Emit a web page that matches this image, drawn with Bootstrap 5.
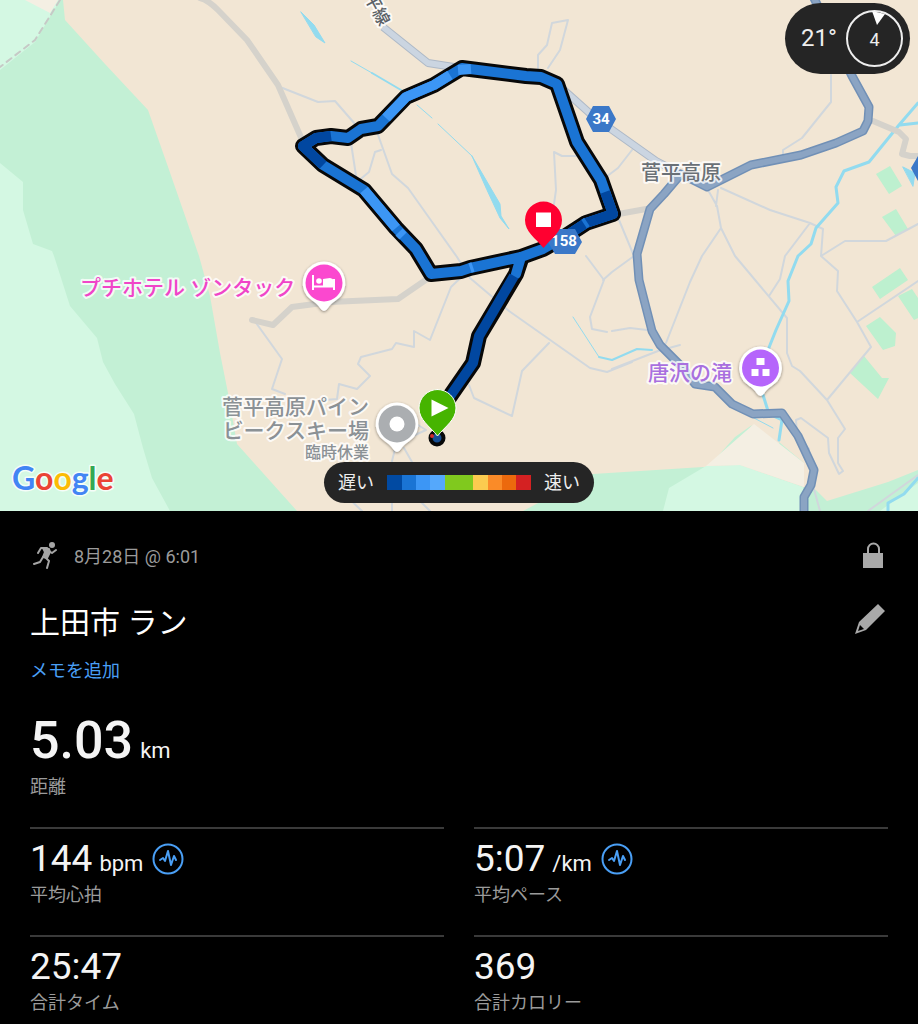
<!DOCTYPE html>
<html lang="ja" data-bs-theme="dark">
<head>
<meta charset="utf-8">
<meta name="viewport" content="width=device-width, initial-scale=1">
<title>上田市 ラン</title>
<link href="https://cdn.jsdelivr.net/npm/bootstrap@5.3.0/dist/css/bootstrap.min.css" rel="stylesheet">
<style>
body{background:#000;color:#f4f4f4;font-family:Roboto,"Noto Sans CJK JP",sans-serif;line-height:1.2}
.map-svg{display:block;width:100%;height:auto}
.map-svg text{font-family:Roboto,"Noto Sans CJK JP",sans-serif;font-weight:500;paint-order:stroke;stroke:#fffc;stroke-width:4px;stroke-linejoin:round}
.map-svg .shield{fill:#fff;stroke:none;font-weight:700;font-size:15px}
.map-svg .brand{font-family:Lato,sans-serif;font-weight:700;font-size:32px;stroke-width:3px}
.map-pill{background:#252525;color:#eee}
.weather{top:3px;right:8px;height:71px;padding:0 7px 0 16px;gap:9px;font-size:24px}
.legend{bottom:8px;left:50%;transform:translateX(-50%);height:41px;padding:0 14px;gap:13px;font-size:18px;white-space:nowrap}
.scale{width:144px;height:15px}
.details{padding:28px 30px 0}
.muted{color:#9b9b9b}
.f18{font-size:18px;line-height:24px}
.date{line-height:28px;padding-top:4px}
.title{font-size:30px;line-height:40px;font-weight:400}
.memo{color:#4a9ff5;text-decoration:none}
.big{font-size:52px;line-height:60px;font-weight:500}
.num{font-size:37px;line-height:44px}
.unit{font-size:22px;line-height:1;margin-left:7px}
.stats{--bs-gutter-x:30px}
.stat{border-top:2px solid #3a3a3a;height:108px;padding-top:8px}
.stat .f18{padding-top:2px}
.icon-btn{background:none;border:0;padding:0;line-height:0;color:#a9a9a9}
.graph-btn{color:#4a9ff5;margin-left:9px}
</style>
</head>
<body>
<section class="position-relative" aria-label="ルートマップ">
<svg class="map-svg" viewBox="0 0 918 511" fill="none" stroke-linejoin="round" stroke-linecap="round">
<defs>
<filter id="sh" x="-30%" y="-30%" width="160%" height="160%"><feDropShadow dx="0" dy="1" stdDeviation="1.5" flood-opacity=".45"/></filter>
<path id="poi" d="M0-21.500A21.500 21.500 0 0 1 17 13C12 18 7 20 4 25Q0 31-4 25C-7 20-12 18-17 13A21.500 21.500 0 0 1 0-21.500Z"/>
<path id="pin" d="M0-18.500A18.500 18.500 0 0 1 18.500 0C18.500 12 8 18 0 28C-8 18-18.500 12-18.500 0A18.500 18.500 0 0 1 0-18.500Z"/>
</defs>
<rect width="918" height="511" fill="#f2e6d4"/>
<!-- woodland -->
<path fill="#c3f0d5" d="M63 0 65 20 105 64 148 110 167 164 199 256 210 296 220 353 228 393 237 444 297 511H0V0ZM523 511 593 474 703 467 741 466 803 487 816 490 827 501 888 482 918 470V511ZM752 425 735 437 718 456 735 450ZM779 442 804 463 790 460 780 450Z"/>
<path fill="#d4f8e3" d="M0 163 23 182V210L33 244 52 251 54 256 70 306 97 338 103 362 115 384 134 414 143 448 152 478 170 511H0ZM0 0H60L35 42 0 70ZM663 511 669 488 706 466 740 465 803 487V511ZM880 511 918 483V511Z"/>
<path fill="#f4efe3" d="M25 0 50 13 58 0ZM754 424 804 463V487L740 465 706 466Z"/>
<path fill="#bdf0cf" d="M876 174 890 166 902 186 889 194ZM882 217 896 209 908 229 896 236ZM872 287 900 268 908 280 880 299ZM898 296 912 289 918 298V318L914 320ZM866 326 880 317 896 333 895 346 883 350ZM864 356 882 378 889 378 878 399 850 373Z"/>
<path stroke="#c6c9c6" stroke-width="2" stroke-dasharray="6 5" d="M60 0 35 40 0 67"/>
<!-- footpaths -->
<g stroke="#d1d7dc" stroke-width="2">
<path d="M280 87 318 102 335 101 355 124M351 143 357 182 369 172 375 152 381 150M377 132 392 174 408 188 430 219 457 257 470 278 509 311 590 368 607 372 632 362M538 72V55L547 45 552 23 568 20 560 50 548 68M577 156H562L554 152 556 190 554 204M602 180 618 168 632 150M619 220 634 256M471 268 451 287 430 340 414 331V347L396 343 392 349 361 357 358 364 370 376 357 389 339 384 337 399 325 400M469 385 474 398 512 416 522 371 549 343M254 320 282 359 272 389 285 394"/>
<path d="M831 75V102L802 138 783 150V154M708 190 717 206 721 228 702 256 690 282 666 343M718 190 716 206M721 188 770 210 810 223 823 229 821 256 845 241 886 241 918 224M810 223 785 256M721 228 735 256 787 318V353L792 366 800 371 827 400 871 347 857 322 837 291 838 271 821 256M785 256 780 279 769 296M857 322 918 281M827 400 845 429 838 438V463L843 471 839 474 829 453 828 438 801 418 796 420 797 435 809 449M612 331 630 328 647 330M612 369 658 351 680 345M586 256 604 280 590 317 592 329 607 332M634 256 612 272 603 280M395 449 392 461 392 511M404 448 412 462 409 490M409 490 430 511M341 491 362 511M418 425 426 430 404 440M812 482 820 511M868 511 918 475"/>
</g>
<!-- streams -->
<g stroke="#92dbef" stroke-width="3">
<path d="M918 103 899 125 869 162 844 171 836 187 838 203 816 228 811 244 798 256 788 281 789 301 776 330 768 350M900 125 918 123M763 395 769 414 782 420 779 440M888 511V503L904 494 918 478"/>
<path stroke-width="1" d="M351 61 372 73M417 105 432 118M438 124 472 156M573 317 599 357M754 418 773 428"/>
<path stroke-width="2" d="M372 73 401 90M599 357 612 360 637 349 652 350"/>
<path fill="#92dbef" stroke-width="1" d="M301 12 314 25 325 43 316 37ZM472 156 500 204 501 216 509 229 500 218 487 190ZM903 167 915 173 913 186Z"/>
</g>
<!-- roads -->
<g stroke="#d5d2cb" stroke-width="6"><path d="M200-2Q208 0 218 10L247 40 278 85 303 142M252 320 273 325 292 307 330 302 398 299 430 277M613 215 646 209M873 121 899 132 906 139 902 154 910 156H918"/></g>
<g stroke-linecap="butt"><path stroke="#aeb9c7" stroke-width="8" d="M383 27 428 63 460 68M556 83 594 117 656 161 681 174"/><path stroke="#cbd5e1" stroke-width="6" d="M383 27 428 63 460 68M556 83 594 117 656 161 681 174"/></g>
<g><path stroke="#7190b6" stroke-width="9" d="M812-6 852 76 869 107 868 121 863 131 836 143 801 155 751 165 707 187 681 174 664 194 650 209 637 254 639 280 652 331 660 345 681 366 695 384 715 387 732 404 753 414 782 413 798 436 814 470 811 485 804 497V514"/><path stroke="#8ba4c3" stroke-width="6" d="M812-6 852 76 869 107 868 121 863 131 836 143 801 155 751 165 707 187 681 174 664 194 650 209 637 254 639 280 652 331 660 345 681 366 695 384 715 387 732 404 753 414 782 413 798 436 814 470 811 485 804 497V514"/></g>
<path fill="#3b78c8" d="M586 119 593 106H609L616 119 609 132H593ZM911 168 918 156V181Z"/>
<text class="shield" x="601" y="124" text-anchor="middle">34</text>
<!-- recorded route -->
<g stroke="#080808" stroke-width="16"><path d="M521 257 470 268 461 271 431 274 416 249 396 228 364 190 323 165 303 146 316 138 331 136 348 138 361 129 378 126 406 97 434 85 462 68 526 76 541 77 557 84 577 142 601 180 613 214 586 223 566 236 543 249ZM521 259 516 274 479 336 473 363 446 402"/></g>
<g stroke="#1a74d4" stroke-width="10"><path d="M521 257 470 268 461 271 431 274 416 249 396 228 364 190 323 165 303 146 316 138 331 136 348 138 361 129 378 126 406 97 434 85 462 68 526 76 541 77 557 84 577 142 601 180 613 214 586 223 566 236 543 249ZM521 257 516 274"/>
<g stroke-linecap="butt"><path stroke="#3c96f5" d="M364 190 396 228M386 118 406 97 434 85 450 75M458 70 471 69M399 232 403 236M470 268 473 267"/><path stroke="#0147a0" d="M323 165 303 146 316 138 331 136M605 192 613 214 586 223 566 236M514 276 479 336 473 363 446 402"/><path stroke="#1a74d4" d="M584 224 587 222"/></g></g>
<path fill="#3b78c8" d="M548 242 555 229H575L582 242 575 254H555Z"/>
<text class="shield" x="564" y="246" text-anchor="middle">158</text>
<circle cx="437" cy="438" r="6.500" fill="#174f94" stroke="#080808" stroke-width="4"/><circle cx="432" cy="436" r="2" fill="#d32c2c"/>
<!-- places -->
<g transform="translate(324 283)"><use href="#poi" fill="#fff" filter="url(#sh)"/><circle r="18.500" fill="#fb48cf"/><path stroke="#fff" stroke-width="2" stroke-linecap="butt" d="M-11-8V7M10-4V7M-11 3.500H10"/><path fill="#fff" d="M-1 3V-4L6-5Q11-4 11 1V3Z"/><circle cx="-5" cy="-2" r="2.800" fill="#fff"/></g>
<g transform="translate(760.500 368)"><use href="#poi" fill="#fff" filter="url(#sh)"/><circle r="18.500" fill="#b565fb"/><path fill="#fff" d="M-4-10H4V-3H-4ZM-9 1H-2V8H-9ZM2 1H9V8H2Z"/></g>
<g transform="translate(397 424)"><use href="#poi" fill="#fff" filter="url(#sh)"/><circle r="18.500" fill="#abaeb1"/><circle r="7.500" fill="#fff"/></g>
<g transform="translate(543.500 220)"><use href="#pin" fill="#ff0030"/><path fill="#fff" d="M-7.500-7.500H7.500V7H-7.500Z"/></g>
<g transform="translate(437.500 408)"><use href="#pin" fill="#46b400" stroke="#fff" stroke-width="1"/><path fill="#fff" d="M-6-8.500 11 0-6 8.500Z"/></g>
<text x="641" y="180" font-size="20" fill="#6a7076">菅平高原</text>
<text x="80" y="295" font-size="21" fill="#f045c8">プチホテル ゾンタック</text>
<text x="648" y="380" font-size="21" fill="#a970df">唐沢の滝</text>
<g fill="#8b9195" text-anchor="end"><text x="369" y="414" font-size="21">菅平高原パイン</text><text x="369" y="438" font-size="21">ビークスキー場</text><text x="369" y="458" font-size="16">臨時休業</text></g>
<text transform="translate(364 -3) rotate(62)" x="0" y="0" font-size="17" fill="#5b6167">平線</text>
<text class="brand" x="12" y="490"><tspan fill="#4285f4">G</tspan><tspan fill="#ea4335">o</tspan><tspan fill="#fbbc05">o</tspan><tspan fill="#4285f4">g</tspan><tspan fill="#34a853">l</tspan><tspan fill="#ea4335">e</tspan></text>
</svg>
<div class="map-pill weather position-absolute rounded-pill d-flex align-items-center">
<span>21°</span>
<svg width="57" height="57" viewBox="0 0 57 57" role="img" aria-label="風速 4"><circle cx="28.500" cy="28.500" r="27.500" fill="none" stroke="#eee" stroke-width="2"/><path fill="#fff" d="M26 1 39 4 31 15Z"/><text x="28.500" y="36" text-anchor="middle" font-size="18" fill="#eee">4</text></svg>
</div>
<div class="map-pill legend position-absolute rounded-pill d-flex align-items-center">
<span>遅い</span>
<svg class="scale" viewBox="0 0 144 15" shape-rendering="crispEdges"><path fill="#014aa2" d="M0 0H15V15H0Z"/><path fill="#1a74d4" d="M15 0H29V15H15Z"/><path fill="#3c96f5" d="M29 0H43V15H29Z"/><path fill="#55a8fb" d="M43 0H58V15H43Z"/><path fill="#80c91e" d="M58 0H86V15H58Z"/><path fill="#fbcb4f" d="M86 0H101V15H86Z"/><path fill="#fa8b28" d="M101 0H115V15H101Z"/><path fill="#ec690d" d="M115 0H129V15H115Z"/><path fill="#d42122" d="M129 0H144V15H129Z"/></svg>
<span>速い</span>
</div>
</section>
<main class="details">
<div class="d-flex align-items-center justify-content-between muted">
<div class="d-flex align-items-center gap-3">
<svg width="28" height="28" viewBox="0 0 28 28" fill="none" stroke="#a5a5a5" stroke-width="2" stroke-linecap="round" stroke-linejoin="round"><circle cx="22" cy="4" r="3" fill="#a5a5a5" stroke="none"/><path fill="#a5a5a5" d="M13 7 19 8 20 11 17 17 13 16 15 11Z"/><path d="M17 7 11 7 8 12M19 10 22 12 26 9M15 16 19 20 17 27M13 16 10 21 4 23"/></svg>
<span class="date f18">8月28日 @ 6:01</span>
</div>
<button class="icon-btn" type="button" aria-label="公開設定"><svg width="30" height="28" viewBox="0 0 30 28"><path fill="#a9a9a9" d="M5 12H25V27H5Z"/><path fill="none" stroke="#a9a9a9" stroke-width="2" d="M10 13V8A5.500 5.500 0 0 1 21 8V13"/></svg></button>
</div>
<div class="d-flex align-items-start justify-content-between mt-4 pt-2">
<h1 class="title m-0">上田市 ラン</h1>
<button class="icon-btn" type="button" aria-label="編集"><svg width="34" height="32" viewBox="0 0 34 32"><path fill="#a9a9a9" fill-rule="evenodd" d="M24 1 31 8 12 27 1 31 5 19ZM6 22 4 28 10 26Z"/></svg></button>
</div>
<a class="memo f18 d-inline-block mt-3" href="#">メモを追加</a>
<div class="mt-4 pt-1"><span class="big">5.03</span><span class="unit">km</span></div>
<div class="f18 muted pt-1">距離</div>
<div class="row stats mt-4 pt-1">
<div class="col-6"><div class="stat"><div class="d-flex align-items-center"><div class="num">144<span class="unit">bpm</span></div><button class="icon-btn graph-btn" type="button" aria-label="平均心拍のグラフ"><svg width="32" height="32" viewBox="0 0 32 32" fill="none" stroke="currentColor" stroke-width="2" stroke-linejoin="round" stroke-linecap="round"><circle cx="16" cy="16" r="14.500"/><path d="M8 17 11 15 13 18 16 8 19 22 22 13 24 17"/></svg></button></div><div class="f18 muted">平均心拍</div></div></div>
<div class="col-6"><div class="stat"><div class="d-flex align-items-center"><div class="num">5:07<span class="unit">/km</span></div><button class="icon-btn graph-btn" type="button" aria-label="平均ペースのグラフ"><svg width="32" height="32" viewBox="0 0 32 32" fill="none" stroke="currentColor" stroke-width="2" stroke-linejoin="round" stroke-linecap="round"><circle cx="16" cy="16" r="14.500"/><path d="M8 17 11 15 13 18 16 8 19 22 22 13 24 17"/></svg></button></div><div class="f18 muted">平均ペース</div></div></div>
<div class="col-6"><div class="stat"><div class="num">25:47</div><div class="f18 muted">合計タイム</div></div></div>
<div class="col-6"><div class="stat"><div class="num">369</div><div class="f18 muted">合計カロリー</div></div></div>
</div>
</main>
<script src="https://cdn.jsdelivr.net/npm/bootstrap@5.3.0/dist/js/bootstrap.bundle.min.js"></script>
</body>
</html>
